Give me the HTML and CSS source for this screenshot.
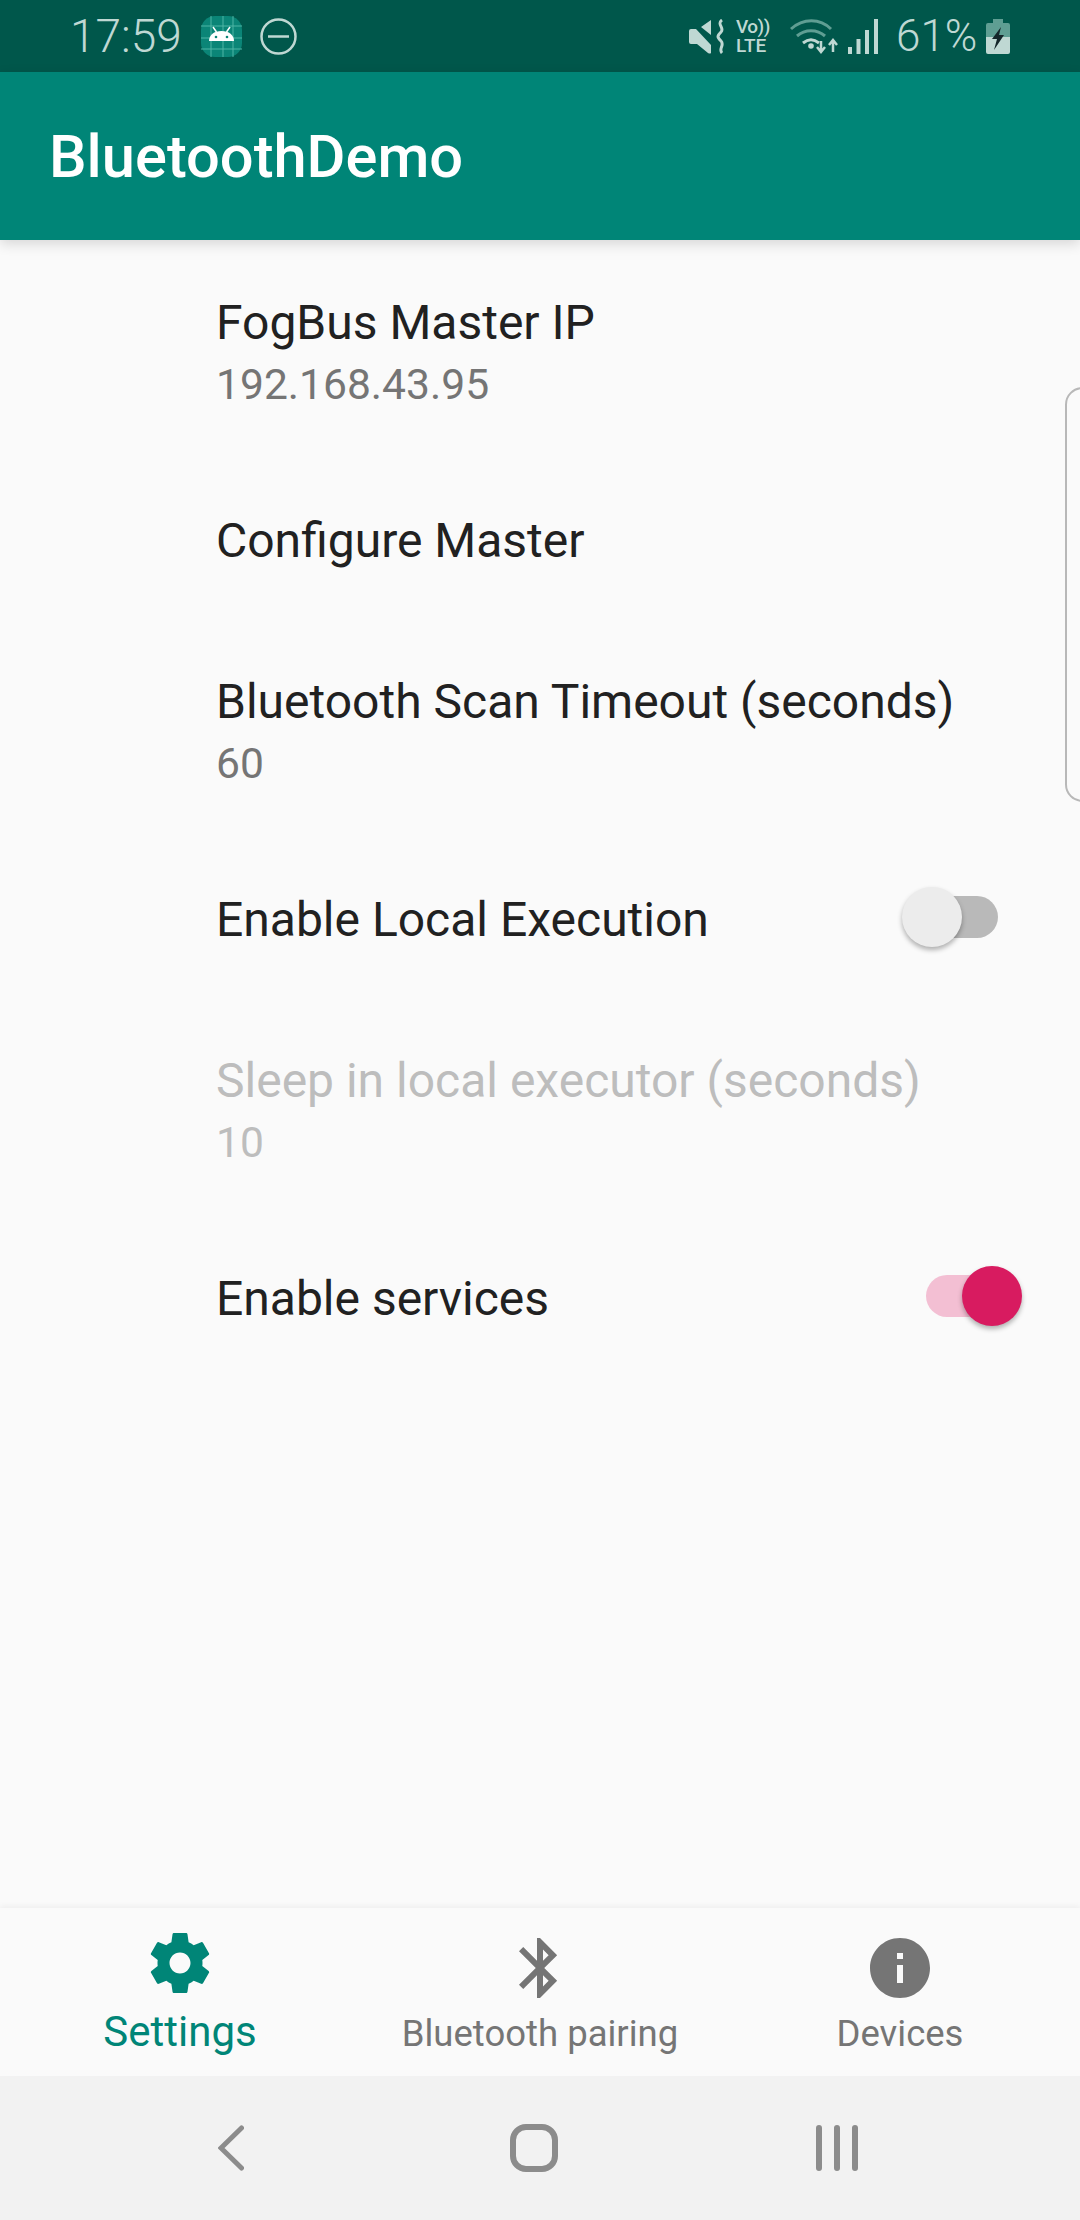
FILE: index.html
```html
<!DOCTYPE html>
<html lang="en">
<head>
<meta charset="utf-8">
<title>BluetoothDemo</title>
<link rel="stylesheet" href="styles.css">
</head>
<body>
<div class="screen">
  <header class="status">
    <div class="status-left">
      <span class="clock">17:59</span>
      <svg class="app-icon" viewBox="0 0 41 41">
        <rect width="41" height="41" rx="14" fill="#0b8577"/>
        <path d="M0 10H41M0 22H41M0 33H41M10 0V41M22 0V41M32 0V41" stroke="#4fb5a6" stroke-width="1" fill="none"/>
        <path d="M8 25c0-6 5-10 12.500-10S33 19 33 25z" fill="#fff"/>
        <path d="M12 11l3.500 5M29 11l-3.500 5" stroke="#fff" stroke-width="1.500"/>
        <circle cx="15" cy="21" r="1.300" fill="#0b8577"/><circle cx="26" cy="21" r="1.300" fill="#0b8577"/>
      </svg>
      <svg class="dnd" viewBox="0 0 37 37"><circle cx="18.500" cy="18.500" r="17" fill="none" stroke="#bfd8d3" stroke-width="2.500"/><path d="M8 18.500H29" stroke="#bfd8d3" stroke-width="2.500"/></svg>
    </div>
    <div class="status-right">
      <svg class="mute" viewBox="0 0 36 35"><path d="M0 12q0-2 2-2h5l15 16v8q-1 1-3 0L8 25H2q-2 0-2-2zM12 8l10-7v15z" fill="#bfd8d3"/><path d="M33 1c-6 4 3 8-1 12s-4 5 0 9-3 8 1 12" fill="none" stroke="#bfd8d3" stroke-width="3"/></svg>
      <div class="volte"><span class="vo">Vo))</span><span class="lte">LTE</span></div>
      <svg class="wifi" viewBox="0 0 48 35"><path d="M1 10C13-1 30-1 41 10" fill="none" stroke="#5f9e93" stroke-width="3"/><path d="M7 17c8-7 20-7 28 0" fill="none" stroke="#5f9e93" stroke-width="3"/><path d="M13 24c5-4 11-4 16 0" fill="none" stroke="#bfd8d3" stroke-width="3"/><circle cx="21" cy="27" r="2.800" fill="#bfd8d3"/><path d="M31 22v10M27 28l4 5 4-5M43 33V22M39 26l4-5 4 5" fill="none" stroke="#bfd8d3" stroke-width="2.500"/></svg>
      <svg class="signal" viewBox="0 0 30 35"><path d="M0 28h4v7H0zM8.500 20h4v15h-4zM17 11h4v24h-4zM26 0h4v35h-4z" fill="#bfd8d3"/></svg>
      <span class="battery-text">61%</span>
      <svg class="battery" viewBox="0 0 24 35"><path d="M7 0h10v4h5q2 0 2 2v12H0V6q0-2 2-2h5z" fill="#5f9e93"/><path d="M0 18h24v15q0 2-2 2H2q-2 0-2-2z" fill="#bfd8d3"/><path d="M15 8L6 20h5L8 31l10-15h-5z" fill="#14262a"/></svg>
    </div>
  </header>
  <div class="toolbar"><h1 class="toolbar-title">BluetoothDemo</h1></div>
  <main class="list">
    <div class="pref pref-double"><div class="pref-text"><div class="pref-title">FogBus Master IP</div><div class="pref-summary">192.168.43.95</div></div></div>
    <div class="pref pref-single"><div class="pref-text"><div class="pref-title">Configure Master</div></div></div>
    <div class="pref pref-double"><div class="pref-text"><div class="pref-title">Bluetooth Scan Timeout (seconds)</div><div class="pref-summary">60</div></div></div>
    <div class="pref pref-single"><div class="pref-text"><div class="pref-title">Enable Local Execution</div></div><div class="switch"><span class="track"></span><span class="thumb"></span></div></div>
    <div class="pref pref-double is-disabled"><div class="pref-text"><div class="pref-title">Sleep in local executor (seconds)</div><div class="pref-summary">10</div></div></div>
    <div class="pref pref-single"><div class="pref-text"><div class="pref-title">Enable services</div></div><div class="switch is-on"><span class="track"></span><span class="thumb"></span></div></div>
    <div class="edge-handle"></div>
  </main>
  <nav class="tabs">
    <div class="tab is-active">
      <svg class="tab-icon" viewBox="0 0 24 24"><path d="M19.430 12.980c.04-.32.07-.64.07-.98s-.03-.66-.07-.98l2.110-1.650c.19-.15.24-.42.12-.64l-2-3.460c-.12-.22-.39-.3-.61-.22l-2.490 1c-.52-.4-1.080-.73-1.690-.98l-.38-2.650C14.460 2.180 14.250 2 14 2h-4c-.25 0-.46.18-.49.42l-.38 2.650c-.61.25-1.170.59-1.690.98l-2.490-1c-.23-.09-.49 0-.61.22l-2 3.460c-.13.22-.07.49.12.64l2.110 1.650c-.04.32-.07.65-.07.98s.03.66.07.98l-2.110 1.650c-.19.15-.24.42-.12.64l2 3.460c.12.22.39.3.61.22l2.490-1c.52.4 1.080.73 1.690.98l.38 2.650c.03.24.24.42.49.42h4c.25 0 .46-.18.49-.42l.38-2.650c.61-.25 1.170-.59 1.690-.98l2.490 1c.23.09.49 0 .61-.22l2-3.460c.12-.22.07-.49-.12-.64l-2.110-1.650zM12 15.500c-1.930 0-3.500-1.570-3.500-3.500s1.570-3.500 3.500-3.500 3.500 1.570 3.500 3.500-1.570 3.500-3.500 3.500z"/></svg>
      <span class="tab-label">Settings</span>
    </div>
    <div class="tab">
      <svg class="tab-icon" viewBox="0 0 24 24"><path d="M17.710 7.710L12 2h-1v7.590L6.410 5 5 6.410 10.590 12 5 17.590 6.410 19 11 14.410V22h1l5.710-5.710-4.300-4.290 4.300-4.290zM13 5.830l1.880 1.880L13 9.590V5.830zm1.880 10.460L13 18.170v-3.760l1.880 1.880z"/></svg>
      <span class="tab-label">Bluetooth pairing</span>
    </div>
    <div class="tab">
      <svg class="tab-icon" viewBox="0 0 24 24"><path d="M12 2C6.480 2 2 6.480 2 12s4.480 10 10 10 10-4.480 10-10S17.520 2 12 2zm1 15h-2v-6h2v6zm0-8h-2V7h2v2z"/></svg>
      <span class="tab-label">Devices</span>
    </div>
  </nav>
  <footer class="sysnav">
    <svg class="sys-back" viewBox="0 0 26 46"><path d="M23.500 3L3 23l20.500 20" fill="none" stroke="#8c8c8c" stroke-width="5" stroke-linecap="round"/></svg>
    <svg class="sys-home" viewBox="0 0 48 48"><rect x="3" y="3" width="42" height="42" rx="13" fill="none" stroke="#8c8c8c" stroke-width="6"/></svg>
    <svg class="sys-recent" viewBox="0 0 42 46"><path d="M3 3V43M21 3V43M39 3V43" fill="none" stroke="#8c8c8c" stroke-width="6" stroke-linecap="round"/></svg>
  </footer>
</div>
</body>
</html>
```
FILE: styles.css
```css
* { box-sizing: border-box; }
html, body { margin: 0; padding: 0; }
body { font-family: Roboto, "Liberation Sans", sans-serif; background: #fafafa; }
.screen { width: 1080px; height: 2220px; display: flex; flex-direction: column; overflow: hidden; }

.status { height: 72px; flex: none; background: #00574b; display: flex; justify-content: space-between; align-items: center; padding: 0 70px; color: #bfd8d3; }
.status-left, .status-right { display: flex; align-items: center; }
.clock { font-size: 46px; font-weight: 300; width: 131px; }
.app-icon { width: 41px; height: 41px; margin-right: 18px; }
.dnd { width: 37px; height: 37px; }
.mute { width: 36px; height: 35px; margin-right: 11px; }
.volte { width: 38px; margin-right: 16px; display: flex; flex-direction: column; font-weight: 500; line-height: 19px; }
.vo { font-size: 19px; white-space: nowrap; letter-spacing: -.5px; }
.lte { font-size: 19px; letter-spacing: 0; }
.wifi { width: 48px; height: 35px; margin-right: 10px; }
.signal { width: 30px; height: 35px; margin-right: 18px; }
.battery-text { font-size: 44px; font-weight: 300; width: 90px; }
.battery { width: 24px; height: 35px; }

.toolbar { height: 168px; flex: none; background: #008577; display: flex; align-items: center; padding: 2px 0 0 49px; box-shadow: 0 4px 12px rgba(0,0,0,.14); position: relative; z-index: 2; }
.toolbar-title { margin: 0; font-size: 59.6px; font-weight: 500; color: #fff; }

.list { flex: 1; position: relative; padding-top: 3px; }
.pref { display: flex; align-items: center; padding-left: 216px; padding-right: 58px; }
.pref-double { height: 216px; }
.pref-single { height: 163px; }
.pref-text { flex: 1; }
.pref-title { font-size: 48px; line-height: 66px; color: #212121; }
.pref-summary { font-size: 42.6px; line-height: 56px; color: #757575; }
.is-disabled .pref-title, .is-disabled .pref-summary { color: #bdbdbd; }

.switch { width: 120px; height: 60px; padding: 9px 24px; position: relative; margin-bottom: 5px; }
.track { display: block; height: 42px; border-radius: 21px; background: #b9b9b9; }
.thumb { position: absolute; top: 0; left: 0; width: 60px; height: 60px; border-radius: 50%; background: #ececec; box-shadow: 0 3px 5px rgba(0,0,0,.3); }
.is-on .track { background: #f3bfd3; }
.is-on .thumb { left: auto; right: 0; background: #d81b60; }

.edge-handle { position: absolute; top: 147px; right: -20px; width: 35px; height: 415px; border: 2px solid #b8b8b8; border-radius: 18px; }

.tabs { height: 168px; flex: none; background: #fafafa; display: flex; box-shadow: 0 -2px 6px rgba(0,0,0,.05); position: relative; }
.tab { flex: 1; display: flex; flex-direction: column; align-items: center; padding-top: 24px; color: #757575; fill: #757575; }
.tab-icon { width: 72px; height: 72px; }
.tab-label { font-size: 36.5px; line-height: 60px; }
.tab.is-active { padding-top: 19px; color: #008577; fill: #008577; }
.is-active .tab-label { font-size: 42px; line-height: 66px; }

.sysnav { height: 144px; flex: none; background: #f2f2f2; display: flex; align-items: center; position: relative; padding-left: 218px; }
.sys-back { width: 26px; height: 46px; margin-right: 266px; }
.sys-home { width: 48px; height: 48px; margin-right: 258px; }
.sys-recent { width: 42px; height: 46px; }
```
